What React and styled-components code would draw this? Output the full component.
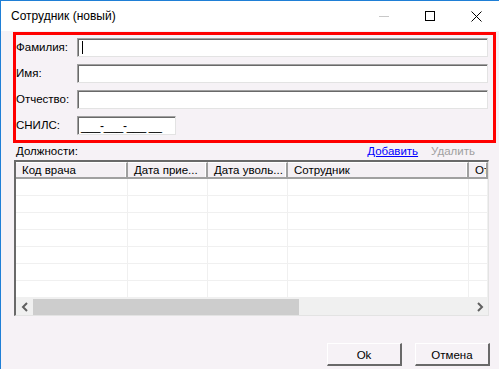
import React from "react";
import styled, {createGlobalStyle} from "styled-components";

const GlobalStyle = createGlobalStyle`
	html, body {
		margin: 0;
		padding: 0;
		background: #f6f2f6;
	}
	* {
		box-sizing: border-box;
	}
`;

const Window = styled.div`
	width: 499px;
	height: 369px;
	overflow: hidden;
	display: flex;
	flex-direction: column;
	background-color: #f6f2f6;
	border-top: 1px solid #1f7fd6;
	border-left: 1px solid #1f7fd6;
	font-family: "Liberation Sans", Arial, sans-serif;
	font-size: 11.5px;
	color: #000;
`;

const TitleBar = styled.div`
	height: 30px;
	flex-shrink: 0;
	background-color: #fff;
	display: flex;
	align-items: center;
	padding-left: 10px;
`;

const Title = styled.span`
	flex: 1;
	font-size: 12px;
	padding-bottom: 1px;
`;

const TitleButton = styled.div`
	width: 46px;
	height: 30px;
	display: flex;
	align-items: center;
	justify-content: center;
	& svg {
		display: block;
	}
`;

const Body = styled.div`
	flex: 1;
	display: flex;
	flex-direction: column;
	padding: 1px 3px 0 12px;
`;

const FormBox = styled.div`
	border: 3px solid #ff0000;
	padding: 3px 5px 5px 0;
	display: grid;
	grid-template-columns: 61px 1fr;
	grid-auto-rows: 19px;
	row-gap: 7px;
	align-items: center;
`;

const Label = styled.span`
	line-height: 19px;
`;

const Field = styled.div`
	height: 19px;
	width: ${(p) => (p.short ? "99px" : "100%")};
	background-color: #fff;
	border: 1px solid;
	border-color: #a0a0a0 #e3e3e3 #e3e3e3 #a0a0a0;
	box-shadow: inset 1px 1px 0 #696969;
	display: flex;
	align-items: center;
	padding-left: 3px;
	font-size: 12px;
	letter-spacing: -0.3px;
`;

const Caret = styled.span`
	width: 1px;
	height: 13px;
	background-color: #000;
	margin-left: 1px;
`;

const SectionRow = styled.div`
	height: 17px;
	display: flex;
	align-items: center;
	padding: 0 21px 1px 3px;
	gap: 13px;
`;

const SectionTitle = styled.span`
	flex: 1;
`;

const Action = styled.span`
	color: ${(p) => (p.disabled ? "#a0a0a0" : "#0000ff")};
	text-decoration: ${(p) => (p.disabled ? "none" : "underline")};
`;

const Table = styled.div`
	margin: 0 7px 0 1px;
	height: 156px;
	display: flex;
	flex-direction: column;
	background-color: #fff;
	border-style: solid;
	border-width: 2px 1px 1px 2px;
	border-color: #696969 #e3e3e3 #e3e3e3 #696969;
	overflow: hidden;
`;

const Grid = styled.div`
	display: grid;
	grid-template-columns: 112px 80px 80px 181px 19px;
	grid-auto-rows: 17px;
	flex: 1;
`;

const HeadCell = styled.div`
	background-color: #f4f0f4;
	border-top: 1px solid #fff;
	border-bottom: 2px solid #a0a0a0;
	border-right: 2px solid #a0a0a0;
	box-shadow: inset -1px 0 0 #fff;
	padding-left: 6px;
	line-height: 14px;
	white-space: nowrap;
	overflow: hidden;
	&:last-child {
		padding-left: 3px;
		border-right: none;
	}
`;

const Cell = styled.div`
	border-right: 1px solid #f0f0f0;
	border-bottom: 1px solid #f0f0f0;
`;

const ScrollBar = styled.div`
	height: 17px;
	flex-shrink: 0;
	display: flex;
	background-color: #f0f0f0;
`;

const ScrollArrow = styled.div`
	width: 17px;
	display: flex;
	align-items: center;
	justify-content: center;
`;

const Thumb = styled.div`
	width: 266px;
	margin: 1px 0 0;
	background-color: #cdcdcd;
`;

const Track = styled.div`
	flex: 1;
`;

const Footer = styled.div`
	margin-top: 27px;
	display: flex;
	justify-content: flex-end;
	gap: 13px;
	padding-right: 6px;
`;

const Button = styled.div`
	width: 75px;
	height: 23px;
	background-color: #f6f2f6;
	border-style: solid;
	border-width: 1px 2px 2px 1px;
	border-color: #fff #696969 #696969 #fff;
	display: flex;
	align-items: center;
	justify-content: center;
	padding-top: 1px;
`;

const columns = ["Код врача", "Дата прие...", "Дата уволь...", "Сотрудник", "От"];
const fields = [
	{label: "Фамилия:", caret: true},
	{label: "Имя:"},
	{label: "Отчество:"},
];

function Chevron({dir}) {
	const d = dir === "left" ? "M6 1 L2 5 L6 9" : "M2 1 L6 5 L2 9";
	return (
		<svg width="8" height="10" viewBox="0 0 8 10">
			<path d={d} fill="none" stroke="#606060" strokeWidth="2" />
		</svg>
	);
}

export default function App() {
	return (
		<>
			<GlobalStyle />
			<Window>
				<TitleBar>
					<Title>Сотрудник (новый)</Title>
					<TitleButton>
						<svg width="10" height="10" viewBox="0 0 10 10">
							<path d="M0 5.5 H10" stroke="#c8c8c8" strokeWidth="1" />
						</svg>
					</TitleButton>
					<TitleButton>
						<svg width="10" height="10" viewBox="0 0 10 10">
							<rect x="0.5" y="0.5" width="9" height="9" fill="none" stroke="#000" strokeWidth="1" />
						</svg>
					</TitleButton>
					<TitleButton>
						<svg width="11" height="11" viewBox="0 0 11 11">
							<path d="M0.5 0.5 L10.5 10.5 M10.5 0.5 L0.5 10.5" stroke="#000" strokeWidth="1" />
						</svg>
					</TitleButton>
				</TitleBar>
				<Body>
					<FormBox>
						{fields.map((f) => (
							<React.Fragment key={f.label}>
								<Label>{f.label}</Label>
								<Field>{f.caret && <Caret />}</Field>
							</React.Fragment>
						))}
						<Label>СНИЛС:</Label>
						<Field short>___-___-___ __</Field>
					</FormBox>
					<SectionRow>
						<SectionTitle>Должности:</SectionTitle>
						<Action>Добавить</Action>
						<Action disabled>Удалить</Action>
					</SectionRow>
					<Table>
						<Grid>
							{columns.map((c) => (
								<HeadCell key={c}>{c}</HeadCell>
							))}
							{Array.from({length: 7 * columns.length}).map((_, i) => (
								<Cell key={i} />
							))}
						</Grid>
						<ScrollBar>
							<ScrollArrow>
								<Chevron dir="left" />
							</ScrollArrow>
							<Thumb />
							<Track />
							<ScrollArrow>
								<Chevron dir="right" />
							</ScrollArrow>
						</ScrollBar>
					</Table>
					<Footer>
						<Button>Ok</Button>
						<Button>Отмена</Button>
					</Footer>
				</Body>
			</Window>
		</>
	);
}
